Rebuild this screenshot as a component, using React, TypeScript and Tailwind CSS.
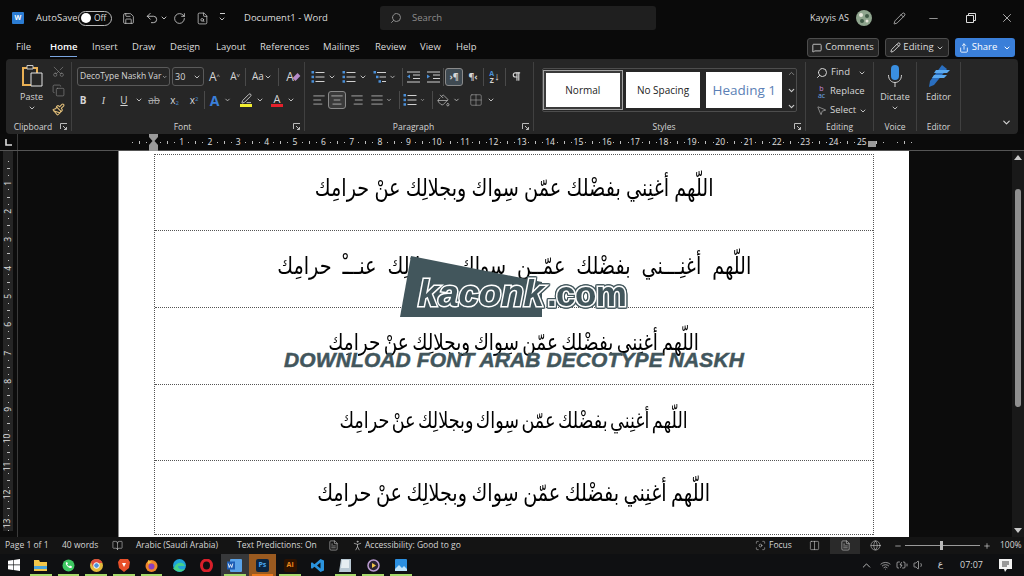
import type { ReactNode } from "react";
import {
  AlignCenter,
  AlignJustify,
  AlignLeft,
  AlignRight,
  BookOpen,
  ChevronDown,
  ChevronUp,
  Copy,
  FileText,
  Focus,
  Grid2x2,
  Globe,
  MessageSquare,
  Minus,
  MousePointer2,
  PaintBucket,
  Paintbrush,
  Pencil,
  PenLine,
  Pilcrow,
  Plus,
  Scissors,
  Search,
  Share,
  Undo2,
  RotateCw,
  Save,
  FileSearch,
  Volume1,
  Wifi,
  BatteryCharging,
  PersonStanding,
  Columns2,
  X,
} from "lucide-react";

const phrase = "اللّهم أغنِني بفضْلك عمّن سِواك وبجلالِك عنْ حرامِك";
const phraseLong = "اللّهم أغنِـــني بفضْلك عمّــن سِواك وبجلالِك عنـــْ حرامِك";

function Cell(props: { w: string; children?: ReactNode }) {
  return <div className={`${props.w} shrink-0 flex items-center justify-center`}>{props.children}</div>;
}

function Caret() {
  return <ChevronDown size={8} strokeWidth={3} className="text-[#bdbdbd]" />;
}

function Sep() {
  return <div className="w-px h-[18px] bg-[#4a4a4a] shrink-0" />;
}

function GroupLabel(props: { text: string; launcher?: boolean }) {
  return (
    <div className={`absolute -bottom-[3px] left-0 right-0 h-[14px] flex items-center justify-center text-[8.5px] text-[#d4d4d4] ${props.launcher ? "pr-[11px]" : ""}`}>
      {props.text}
      {props.launcher && (
        <svg width="8" height="8" viewBox="0 0 8 8" className="absolute right-[3px] top-[3px]" fill="none" stroke="#bbb">
          <path d="M0.5 6V0.5H7M3 3l3.5 3.5M6.5 4v2.500H4" />
        </svg>
      )}
    </div>
  );
}

function ListIcon(props: { indent?: boolean }) {
  return (
    <svg width="14" height="14" viewBox="0 0 14 14" fill="none">
      <g stroke="#d0d0d0" strokeWidth="1.1">
        <path d={props.indent ? "M4 2.500h9M6.500 7h6.500M9 11.500h4" : "M4.500 2.500h9M4.500 7h9M4.500 11.500h9"} />
      </g>
      <g fill="#4a90d9">
        <rect x="0.5" y="1" width="2.5" height="2.5" />
        <rect x={props.indent ? "3" : "0.5"} y="5.7" width="2.5" height="2.5" />
        <rect x={props.indent ? "5.5" : "0.5"} y="10.2" width="2.5" height="2.5" />
      </g>
    </svg>
  );
}

function IndentIcon(props: { flip?: boolean }) {
  return (
    <svg width="13" height="12" viewBox="0 0 13 12" fill="none">
      <path d="M0 1h13M6 4h7M6 7.500h7M0 11h13" stroke="#cfcfcf" />
      <path d={props.flip ? "M0 3.500l3 2-3 2z" : "M3 3.500l-3 2 3 2z"} fill="#4a90d9" />
    </svg>
  );
}

function RulerCell(props: { label?: ReactNode; vertical?: boolean }) {
  const sub = props.vertical ? "h-[7.09px] w-full" : "w-[7.09px] h-full";
  const tick = props.vertical ? "w-[3px] h-px bg-[#bdbdbd]" : "w-px h-[3px] bg-[#bdbdbd]";
  return (
    <div className={props.vertical ? "flex flex-col h-[28.35px] w-full shrink-0" : "flex w-[28.35px] h-full shrink-0"}>
      <div className={`${sub} shrink-0 flex items-center justify-center text-[8.5px] text-[#e0e0e0]`}>{props.label}</div>
      <div className={`${sub} shrink-0 flex items-center justify-center`}>
        <div className="w-px h-px bg-[#bdbdbd]" />
      </div>
      <div className={`${sub} shrink-0 flex items-center justify-center`}>
        <div className={tick} />
      </div>
      <div className={`${sub} shrink-0 flex items-center justify-center`}>
        <div className="w-px h-px bg-[#bdbdbd]" />
      </div>
    </div>
  );
}

function Row(props: { className: string; text: string }) {
  return (
    <div
      dir="rtl"
      className={`w-full flex items-center justify-center border-b border-dotted border-[#555] text-black font-['DejaVu_Sans',sans-serif] whitespace-nowrap ${props.className}`}
    >
      <span className="inline-block scale-x-[0.8]">{props.text}</span>
    </div>
  );
}

function TitleBar() {
  return (
    <div className="h-[36px] flex items-center relative text-[#dcdcdc] text-[9.5px]">
      <div className="ml-[12px] w-[12px] h-[12px] bg-[#2b7cd3] rounded-[1px] flex items-center justify-center text-white text-[7px] font-bold">W</div>
      <span className="ml-[12px] w-[42px]">AutoSave</span>
      <div className="w-[34px] h-[15px] ml-[0px] rounded-full border border-[#bbb] flex items-center pl-[2px]">
        <div className="w-[10px] h-[10px] rounded-full bg-white" />
        <span className="ml-[3px] text-[8.5px]">Off</span>
      </div>
      <Save size={13} strokeWidth={1.3} className="ml-[10px]" />
      <Undo2 size={14} strokeWidth={1.4} className="ml-[10px]" />
      <div className="ml-[1px]"><Caret /></div>
      <RotateCw size={13} strokeWidth={1.4} className="ml-[5px]" />
      <FileSearch size={13} strokeWidth={1.3} className="ml-[10px]" />
      <div className="ml-[9px] flex flex-col items-center gap-[1px]">
        <div className="w-[5px] h-px bg-[#ccc]" />
        <Caret />
      </div>
      <span className="ml-[18px] w-[136px]">Document1 - Word</span>
      <div className="w-[276px] h-[24px] bg-[#1f1f1f] rounded-[3px] flex items-center pl-[10px] text-[#8d8d8d]">
        <Search size={12} className="-scale-x-100" />
        <span className="ml-[10px]">Search</span>
      </div>
      <span className="ml-[154px] w-[46px] text-[9px]">Kayyis AS</span>
      <svg width="16" height="16" viewBox="0 0 16 16">
        <circle cx="8" cy="8" r="8" fill="#8fa58e" />
        <circle cx="5" cy="5" r="2" fill="#e8e8dc" />
        <circle cx="11" cy="6" r="2" fill="#3f5a46" />
        <circle cx="6" cy="11" r="2" fill="#3f5a46" />
        <circle cx="11" cy="11" r="1.5" fill="#e8e8dc" />
      </svg>
      <Pencil size={13} strokeWidth={1.3} className="ml-[21px]" />
      <Minus size={13} strokeWidth={1.2} className="ml-[21px]" />
      <svg width="10" height="10" viewBox="0 0 10 10" fill="none" stroke="#dcdcdc" className="ml-[26px]">
        <path d="M0.5 2.500h7v7h-7zM2.500 2.500v-2h7v7h-2" />
      </svg>
      <X size={14} strokeWidth={1.3} className="ml-[24px]" />
    </div>
  );
}

function TabsBar() {
  return (
    <div className="h-[23px] flex items-center text-[9.5px] text-[#dcdcdc]">
      <div className="flex items-center ml-[16px] w-[791px]">
        <span className="w-[34px]">File</span>
        <span className="w-[42px] font-semibold text-white h-[22px] flex items-center">
          <span className="border-b border-[#7ba6e0] pb-[1px] mt-[2px]">Home</span>
        </span>
        <span className="w-[40px]">Insert</span>
        <span className="w-[38px]">Draw</span>
        <span className="w-[46px]">Design</span>
        <span className="w-[44px]">Layout</span>
        <span className="w-[63px]">References</span>
        <span className="w-[52px]">Mailings</span>
        <span className="w-[45px]">Review</span>
        <span className="w-[36px]">View</span>
        <span>Help</span>
      </div>
      <div className="h-[19px] w-[72px] border border-[#4d4d4d] bg-[#242424] rounded-[3px] flex items-center justify-center gap-[3px]">
        <MessageSquare size={10} />
        <span>Comments</span>
      </div>
      <div className="ml-[6px] h-[19px] w-[64px] border border-[#4d4d4d] bg-[#242424] rounded-[3px] flex items-center justify-center gap-[2px]">
        <Pencil size={11} />
        <span>Editing</span>
        <Caret />
      </div>
      <div className="ml-[6px] h-[19px] w-[60px] bg-[#3a7fd9] rounded-[3px] flex items-center justify-center gap-[3px] text-white">
        <Share size={10} />
        <span>Share</span>
        <div className="ml-[3px]"><ChevronDown size={8} strokeWidth={3} /></div>
      </div>
    </div>
  );
}

function Ribbon() {
  const ic = "text-[#cfcfcf]";
  return (
    <div className="mx-[6px] h-[75px] bg-[#262626] rounded-[4px] flex text-[9px] text-[#d6d6d6] font-['Open_Sans',sans-serif]">
      {/* clipboard */}
      <div className="relative w-[66px] shrink-0 flex border-r border-[#404040] my-[3px]">
        <div className="w-[37px] ml-[7px] flex flex-col items-center pt-[2px]">
          <svg width="22" height="24" viewBox="0 0 22 24" fill="none">
            <path d="M2 4h14v17H2z" stroke="#eab054" strokeWidth="2" />
            <path d="M6 1.500h6V5H6z" fill="#262626" stroke="#c9c9c9" />
            <path d="M10 9h11v13H10z" fill="#262626" stroke="#e4e4e4" />
          </svg>
          <span className="mt-[2px]">Paste</span>
          <Caret />
        </div>
        <div className="flex flex-col items-center gap-[6px] pt-[3px] w-[16px]">
          <Scissors size={13} strokeWidth={1.1} className="text-[#8f8f8f] -rotate-90" />
          <Copy size={13} strokeWidth={1.1} className="text-[#8f8f8f]" />
          <Paintbrush size={13} className="text-[#e2bf7a]" />
        </div>
        <GroupLabel text="Clipboard" launcher />
      </div>

      {/* font */}
      <div className="relative w-[233px] shrink-0 border-r border-[#404040] my-[3px]">
        <div className="flex items-center h-[21px] mt-[4px] pl-[5px]">
          <div className="w-[93px] h-[19px] border border-[#5a5a5a] rounded-[3px] flex items-center pl-[2px] justify-between pr-[2px]">
            <span className="whitespace-nowrap text-[8.5px]">DecoType Naskh Var</span>
            <Caret />
          </div>
          <div className="ml-[2px] w-[32px] h-[19px] border border-[#5a5a5a] rounded-[3px] flex items-center pl-[2px] justify-between pr-[2px]">
            <span>30</span>
            <Caret />
          </div>
          <Cell w="w-[21px]"><span className="text-[12px]">A<sup className="text-[6px]">^</sup></span></Cell>
          <Cell w="w-[20px]"><span className="text-[10px]">A<sup className="text-[6px]">v</sup></span></Cell>
          <Sep />
          <Cell w="w-[32px]"><span className="text-[10px]">Aa</span><Caret /></Cell>
          <Sep />
          <Cell w="w-[22px]">
            <span className="text-[12px] relative">A<span className="absolute left-[7px] top-[7px] w-[7px] h-[4px] bg-[#b58ac9] -rotate-45" /></span>
          </Cell>
        </div>
        <div className="flex items-center h-[20px] mt-[3px] pl-[1px] text-[10px]">
          <Cell w="w-[20px]"><span className="font-bold">B</span></Cell>
          <Cell w="w-[21px]"><span className="italic font-['Liberation_Serif',serif]">I</span></Cell>
          <Cell w="w-[20px]"><span className="underline">U</span></Cell>
          <Cell w="w-[9px]"><Caret /></Cell>
          <Cell w="w-[22px]"><span className="line-through text-[#a8a8a8]">ab</span></Cell>
          <Cell w="w-[19px]"><span>x<sub className="text-[6px] text-[#4a90d9]">2</sub></span></Cell>
          <Cell w="w-[20px]"><span>x<sup className="text-[6px] text-[#4a90d9]">2</sup></span></Cell>
          <Sep />
          <Cell w="w-[19px]"><span className="text-[14px] font-bold text-[#3a7fd9]">A</span></Cell>
          <Cell w="w-[7px]"><Caret /></Cell>
          <div className="ml-[5px] w-[20px] flex flex-col items-center">
            <PenLine size={11} className={ic} />
            <div className="w-[12px] h-[3px] bg-[#f2ee30]" />
          </div>
          <Cell w="w-[8px]"><Caret /></Cell>
          <div className="ml-[3px] w-[20px] flex flex-col items-center leading-[11px]">
            <span className="text-[11px]">A</span>
            <div className="w-[12px] h-[3px] bg-[#e5202b]" />
          </div>
          <Cell w="w-[8px]"><Caret /></Cell>
        </div>
        <GroupLabel text="Font" launcher />
      </div>

      {/* paragraph */}
      <div className="relative w-[229px] shrink-0 border-r border-[#404040] my-[3px]">
        <div className="flex items-center h-[21px] mt-[4px] pl-[3px]">
          <Cell w="w-[20px]"><ListIcon /></Cell>
          <Cell w="w-[8px]"><Caret /></Cell>
          <div className="ml-[3px]"><Cell w="w-[20px]"><ListIcon /></Cell></div>
          <Cell w="w-[8px]"><Caret /></Cell>
          <div className="ml-[4px]"><Cell w="w-[18px]"><ListIcon indent /></Cell></div>
          <Cell w="w-[7px]"><Caret /></Cell>
          <div className="ml-[6px]"><Sep /></div>
          <Cell w="w-[20px]"><IndentIcon /></Cell>
          <Cell w="w-[20px]"><IndentIcon flip /></Cell>
          <Sep />
          <div className="ml-[1px] w-[18px] h-[18px] border border-[#8a8a8a] bg-[#3f4a52] rounded-[3px] flex items-center justify-center text-[9px] font-bold">›¶</div>
          <Cell w="w-[20px]"><span className="text-[9px] font-bold">¶‹</span></Cell>
          <Sep />
          <Cell w="w-[21px]"><span className="text-[7px] leading-[7px] font-bold text-[#4a90d9] text-center">A<br /><span className="text-[#d6d6d6]">Z</span></span><span className="text-[11px]">↓</span></Cell>
          <Sep />
          <Cell w="w-[21px]"><Pilcrow size={11} strokeWidth={2.5} /></Cell>
        </div>
        <div className="flex items-center h-[20px] mt-[3px] pl-[4px]">
          <Cell w="w-[19px]"><AlignLeft size={14} strokeWidth={1.2} /></Cell>
          <div className="w-[18px] h-[18px] border border-[#8a8a8a] bg-[#3a3a3a] rounded-[3px] flex items-center justify-center"><AlignCenter size={14} strokeWidth={1.2} /></div>
          <Cell w="w-[21px]"><AlignRight size={14} strokeWidth={1.2} /></Cell>
          <Cell w="w-[19px]"><AlignJustify size={14} strokeWidth={1.2} /></Cell>
          <Cell w="w-[6px]"><Caret /></Cell>
          <div className="ml-[7px]"><Sep /></div>
          <Cell w="w-[20px]"><ListIcon /></Cell>
          <Cell w="w-[5px]"><Caret /></Cell>
          <div className="ml-[7px]"><Sep /></div>
          <Cell w="w-[20px]"><PaintBucket size={13} strokeWidth={1.2} /></Cell>
          <Cell w="w-[7px]"><Caret /></Cell>
          <div className="ml-[6px]"><Cell w="w-[20px]"><Grid2x2 size={14} strokeWidth={1} className="text-[#a8a8a8]" /></Cell></div>
          <Cell w="w-[10px]"><Caret /></Cell>
        </div>
        <GroupLabel text="Paragraph" launcher />
      </div>

      {/* styles */}
      <div className="relative w-[272px] shrink-0 border-r border-[#404040] my-[3px]">
        <div className="ml-[8px] mt-[6px] w-[255px] h-[44px] border border-[#4d4d4d] rounded-[2px] flex items-center pl-[1px]">
          <div className="w-[78px] h-[38px] border-2 border-[#3a3a3a] outline-1 outline-[#a0a0a0] bg-white text-[#222] text-[10px] flex items-center justify-center">Normal</div>
          <div className="ml-[4px] w-[75px] h-[36px] bg-white text-[#222] text-[10px] flex items-center justify-center">No Spacing</div>
          <div className="ml-[6px] w-[76px] h-[36px] bg-white text-[#5b7fb5] text-[13.5px] flex items-center justify-center">Heading 1</div>
          <div className="ml-[4px] w-[10px] h-[42px] flex flex-col items-center justify-between text-[#999]">
            <ChevronUp size={9} />
            <ChevronDown size={9} strokeWidth={3} className="text-[#ccc]" />
            <ChevronDown size={9} strokeWidth={3} className="text-[#ccc]" />
          </div>
        </div>
        <GroupLabel text="Styles" launcher />
      </div>

      {/* editing */}
      <div className="relative w-[68px] shrink-0 border-r border-[#404040] my-[3px] pl-[10px] pt-[3px] flex flex-col gap-[4px] text-[9.5px]">
        <div className="flex items-center h-[15px] gap-[2px]"><Search size={12} className="-scale-x-100" /><span className="ml-[1px]">Find</span><span className="ml-[6px]"><Caret /></span></div>
        <div className="flex items-center h-[15px] gap-[3px]">
          <span className="w-[11px] text-[7px] leading-[7px] text-center"><span className="text-[#c58ad8]">b</span><br /><span className="text-[#6fa8e8]">ac</span></span>
          <span>Replace</span>
        </div>
        <div className="flex items-center h-[15px] gap-[3px]"><MousePointer2 size={11} strokeWidth={1.2} /><span>Select</span><Caret /></div>
        <GroupLabel text="Editing" />
      </div>

      {/* voice */}
      <div className="relative w-[43px] shrink-0 border-r border-[#404040] my-[3px] flex flex-col items-center pt-[2px]">
        <svg width="16" height="24" viewBox="0 0 16 24" fill="none">
          <rect x="4" y="1" width="8" height="15" rx="4" fill="#3a8fe0" />
          <path d="M1.500 11c0 10 13 10 13 0M8 18v5" stroke="#d0d0d0" />
        </svg>
        <span className="mt-[2px]">Dictate</span>
        <Caret />
        <GroupLabel text="Voice" />
      </div>

      {/* editor */}
      <div className="relative w-[44px] shrink-0 border-r border-[#404040] my-[3px] flex flex-col items-center pt-[2px]">
        <svg width="24" height="24" viewBox="0 0 24 24" fill="none">
          <path d="M15 1L3 17l-1 6 5-2L20 5z" fill="#2a6fc0" />
          <path d="M9 6h14l-3 3H7zM7 11h13l-3 3H5z" fill="#5aa9ef" />
        </svg>
        <span className="mt-[2px]">Editor</span>
        <GroupLabel text="Editor" />
      </div>

      <div className="flex-1 flex items-end justify-end pr-[6px] pb-[6px]">
        <ChevronDown size={11} strokeWidth={2.5} />
      </div>
    </div>
  );
}

function HRuler() {
  const nums = Array.from({ length: 25 }, (_, i) => i + 1);
  return (
    <div className="h-[17px] flex border-b border-[#555] bg-[#0b0b0b]">
      <div className="w-[18px] shrink-0 border-r border-[#3a3a3a] flex items-center justify-center">
        <svg width="7" height="7" viewBox="0 0 7 7"><path d="M1 0v6h6" fill="none" stroke="#ddd" strokeWidth="1.6" /></svg>
      </div>
      <div className="ml-[103.4px] flex h-full items-center">
        <RulerCell />
        <RulerCell
          label={
            <svg width="9" height="17" viewBox="0 0 9 17" className="shrink-0" fill="#9a9a9a">
              <path d="M0 0h9v3L5.500 7 9 11v6H0v-6l3.500-4L0 3z" />
            </svg>
          }
        />
        {nums.map((n) => (
          <RulerCell key={n} label={n === 25 ? <span className="relative">25<span className="absolute left-[11px] top-[5px] w-[8px] h-[6px] bg-[#9a9a9a]" /></span> : n} />
        ))}
        <RulerCell />
      </div>
    </div>
  );
}

function VRuler() {
  const nums = Array.from({ length: 13 }, (_, i) => i + 1);
  return (
    <div className="w-[18px] shrink-0 border-r border-[#3a3a3a] h-full py-[3px] pl-[3px] pr-[4px]">
      <div className="h-full bg-[#252525] overflow-hidden flex flex-col -mt-[3px] pt-[0px]">
        <RulerCell vertical />
        {nums.map((n) => (
          <RulerCell key={n} vertical label={<span className="-rotate-90 block">{n}</span>} />
        ))}
      </div>
    </div>
  );
}

function Watermark() {
  return (
    <div className="absolute left-[281px] top-[105px] w-[345px] h-[61px] font-['Liberation_Sans',sans-serif]">
      <svg width="142" height="61" viewBox="0 0 142 61" className="absolute left-0 top-0">
        <polygon points="11,0 142,26 142,61 0,61" fill="#42565c" />
      </svg>
      <div className="absolute left-[18px] top-[18px] flex items-baseline font-bold text-[#42565c] leading-[40px] [-webkit-text-stroke:3px_white] [paint-order:stroke_fill] whitespace-nowrap [filter:drop-shadow(1px_0_0_#42565c)_drop-shadow(-1px_0_0_#42565c)_drop-shadow(0_1px_0_#42565c)_drop-shadow(0_-1px_0_#42565c)]">
        <span className="w-[129px] italic text-[37px] tracking-[-0.3px]">kaconk</span>
        <span className="text-[35px] tracking-[-0.6px]">.com</span>
      </div>
      <div className="absolute left-[-117px] top-[91px] w-[462px] text-center font-bold italic text-[#42565c] text-[21px] leading-[26px] tracking-[0.1px] [-webkit-text-stroke:0.5px_#42565c] whitespace-nowrap">
        DOWNLOAD FONT ARAB DECOTYPE NASKH
      </div>
    </div>
  );
}

function Page() {
  return (
    <div className="relative w-[791px] shrink-0 h-full bg-white border-l border-[#888] pl-[35px] pt-[3px] overflow-hidden">
      <div className="w-[720px] border-x border-t border-dotted border-[#555]">
        <Row className="h-[76px] pb-[9px] text-[24px] [word-spacing:-1px]" text={phrase} />
        <Row className="h-[77px] pb-[7px] text-[24px] [word-spacing:6px]" text={phraseLong} />
        <Row className="h-[77px] pb-[8px] text-[23px] [word-spacing:-3px]" text={phrase} />
        <Row className="h-[76px] pb-[5px] text-[22px] [word-spacing:-4px]" text={phrase} />
        <Row className="h-[74px] pb-[9px] text-[24px] [word-spacing:-2px]" text={phrase} />
      </div>
      <Watermark />
    </div>
  );
}

function Scrollbar() {
  return (
    <div className="w-[12px] shrink-0 h-full bg-[#191919] flex flex-col items-center pt-[4px] pb-[4px] justify-between relative">
      <div className="w-0 h-0 border-x-[4px] border-x-transparent border-b-[5px] border-b-[#c8c8c8]" />
      <div className="absolute top-[38px] left-[3px] w-[6px] h-[218px] rounded-full bg-[#8f8f8f]" />
      <div className="w-0 h-0 border-x-[4px] border-x-transparent border-t-[5px] border-t-[#c8c8c8]" />
    </div>
  );
}

function StatusBar() {
  return (
    <div className="h-[17px] flex items-center text-[8.5px] text-[#d6d6d6] bg-[#141414] whitespace-nowrap">
      <span className="ml-[5px] w-[57px]">Page 1 of 1</span>
      <span className="w-[50px]">40 words</span>
      <BookOpen size={11} strokeWidth={1.2} />
      <span className="ml-[13px] w-[101px]">Arabic (Saudi Arabia)</span>
      <span className="w-[91px]">Text Predictions: On</span>
      <FileText size={11} strokeWidth={1.2} />
      <PersonStanding size={13} strokeWidth={1.2} className="ml-[12px]" />
      <span className="ml-[1px] w-[390px]">Accessibility: Good to go</span>
      <Focus size={11} strokeWidth={1.2} />
      <span className="ml-[3px] w-[40px]">Focus</span>
      <Columns2 size={11} strokeWidth={1.2} />
      <div className="ml-[10px] w-[30px] h-full bg-[#2a2a2a] flex items-center justify-center"><FileText size={11} strokeWidth={1.2} /></div>
      <Globe size={11} strokeWidth={1.2} className="ml-[10px]" />
      <Minus size={8} className="ml-[13px]" />
      <div className="ml-[3px] w-[75px] h-px bg-[#9a9a9a] relative">
        <div className="absolute left-[35px] -top-[4px] w-[3px] h-[9px] bg-[#bbb]" />
      </div>
      <Plus size={8} className="ml-[3px]" />
      <span className="ml-[9px]">100%</span>
    </div>
  );
}

function TaskIcon(props: { bar?: string; bg?: string; children: ReactNode }) {
  return (
    <div className={`w-[27.7px] h-full shrink-0 relative flex items-center justify-center ${props.bg ?? ""}`}>
      {props.children}
      {props.bar && <div className={`absolute bottom-0 left-[3px] right-[3px] h-[2px] ${props.bar}`} />}
    </div>
  );
}

function Taskbar() {
  const green = "bg-[#a6d96a]";
  return (
    <div className="flex-1 flex items-center bg-[#0f1012] text-[#d6d6d6] text-[9px]">
      <div className="w-[27px] shrink-0 flex justify-center">
        <svg width="12" height="12" viewBox="0 0 12 12" fill="#fff"><path d="M0 1.700L5 1v4.600H0zM5.600 1L12 0v5.600H5.600zM0 6.200h5v4.700l-5-.7zM5.600 6.200H12V12l-6.400-1z" /></svg>
      </div>
      <TaskIcon bar={green}><svg width="13" height="12" viewBox="0 0 13 12"><path d="M0 1h5l1 2h7v9H0z" fill="#f2c649" /><rect x="0" y="7" width="13" height="3" fill="#4aa3d8" /></svg></TaskIcon>
      <TaskIcon bar={green}><svg width="13" height="13" viewBox="0 0 13 13"><circle cx="6.500" cy="6.500" r="6" fill="#3dc861" /><path d="M4 3.500c-1 2 2.500 6 5.500 5.500l.5-1.500-2-1-1 1-2-2 1-1-1-1.500z" fill="#fff" /></svg></TaskIcon>
      <TaskIcon bar={green}><svg width="13" height="13" viewBox="0 0 13 13"><circle cx="6.500" cy="6.500" r="6.500" fill="#e3b93c" /><path d="M6.500 0A6.500 6.500 0 0 1 12.500 4H6.500L3 8 1 3A6.500 6.500 0 0 1 6.500 0z" fill="#dd4b3e" /><circle cx="6.500" cy="6.500" r="2.800" fill="#4a90d9" stroke="#fff" /></svg></TaskIcon>
      <TaskIcon bar={green}><svg width="12" height="13" viewBox="0 0 12 13"><path d="M2 0h8l2 3-1 6-5 4-5-4-1-6z" fill="#e8502a" /><path d="M4 4h4L6 8z" fill="#fff" /></svg></TaskIcon>
      <TaskIcon bar={green}><svg width="13" height="13" viewBox="0 0 13 13"><circle cx="6.500" cy="7" r="6" fill="#f0862a" /><circle cx="6.500" cy="7.500" r="3" fill="#8a3fc0" /><path d="M3 1l4 2-4 2z" fill="#f2c649" /></svg></TaskIcon>
      <TaskIcon><svg width="13" height="13" viewBox="0 0 13 13"><circle cx="6.500" cy="6.500" r="6.500" fill="#1fa2d8" /><path d="M1 9c2-6 9-7 11-2H5c0 3 3 4 7 3-3 4-10 3-12-1z" fill="#44d18a" /></svg></TaskIcon>
      <TaskIcon><svg width="13" height="13" viewBox="0 0 13 13"><ellipse cx="6.500" cy="6.500" rx="5" ry="5.500" fill="none" stroke="#d81f2a" strokeWidth="3" /></svg></TaskIcon>
      <TaskIcon bar={green} bg="bg-[#37383a]"><svg width="15" height="13" viewBox="0 0 15 13"><rect x="3" y="0" width="12" height="13" rx="1" fill="#5aa3e8" /><rect x="0" y="2.500" width="8" height="8" fill="#1d5db5" /><path d="M1.200 4.500l1 4 1.300-3 1.300 3 1-4" fill="none" stroke="#fff" strokeWidth="0.8" /></svg></TaskIcon>
      <TaskIcon bar="bg-[#ec7a1c]" bg="bg-[#9a5a20]"><div className="w-[13px] h-[13px] bg-[#0b2440] rounded-[2px] flex items-center justify-center text-[7px] font-bold text-[#4aa8f0]">Ps</div></TaskIcon>
      <TaskIcon bar={green}><div className="w-[13px] h-[13px] bg-[#2e1200] rounded-[2px] flex items-center justify-center text-[7px] font-bold text-[#ef8a1e]">Ai</div></TaskIcon>
      <TaskIcon><svg width="13" height="13" viewBox="0 0 13 13"><path d="M9.500 0L13 1.500v10L9.500 13 3.500 7.800 1 9.800 0 9V4l1-.8 2.500 2z" fill="#2b94de" /><path d="M9.500 3.500L6 6.500l3.500 3z" fill="#0f1012" /></svg></TaskIcon>
      <TaskIcon bar={green}><svg width="12" height="13" viewBox="0 0 12 13"><path d="M2 0h10v13H0z" fill="#b9c9d4" /><path d="M3 1h7v8H2z" fill="#e6eef2" /></svg></TaskIcon>
      <TaskIcon bar={green}><svg width="13" height="13" viewBox="0 0 13 13"><circle cx="6.500" cy="6.500" r="5.500" fill="#2b2333" stroke="#b99bd0" strokeWidth="1.500" /><path d="M5 4l4 2.500L5 9z" fill="#f2c649" /></svg></TaskIcon>
      <TaskIcon bar={green}><svg width="12" height="12" viewBox="0 0 12 12"><rect width="12" height="12" rx="1" fill="#2b8fe0" /><path d="M0 10l4-4 3 3 2-2 3 3v2H0z" fill="#bfe3fa" /></svg></TaskIcon>
      <ChevronUp size={13} strokeWidth={1.5} className="ml-[445px]" />
      <Wifi size={11} strokeWidth={1.4} className="ml-[7px]" />
      <BatteryCharging size={12} strokeWidth={1.3} className="ml-[5px]" />
      <Volume1 size={12} strokeWidth={1.3} className="ml-[5px]" />
      <span className="ml-[13px] font-['DejaVu_Sans',sans-serif]">ع</span>
      <span className="ml-[17px] w-[30px]">07:07</span>
      <svg width="13" height="13" viewBox="0 0 13 13" className="ml-[9px]" fill="#f2f2f2"><path d="M0 0h13v10H8l-2 3-1-3H0z" /><path d="M3 3h7M3 5h7M3 7h5" stroke="#111" strokeWidth="0.8" /></svg>
    </div>
  );
}

export default function App() {
  return (
    <div className="w-[1024px] h-[576px] overflow-hidden bg-[#0a0a0a] flex flex-col font-['Open_Sans',sans-serif]">
      <TitleBar />
      <TabsBar />
      <Ribbon />
      <HRuler />
      <div className="h-[386px] flex bg-[#0c0c0c]">
        <VRuler />
        <div className="w-[100px] shrink-0" />
        <Page />
        <div className="flex-1" />
        <Scrollbar />
      </div>
      <StatusBar />
      <Taskbar />
    </div>
  );
}
